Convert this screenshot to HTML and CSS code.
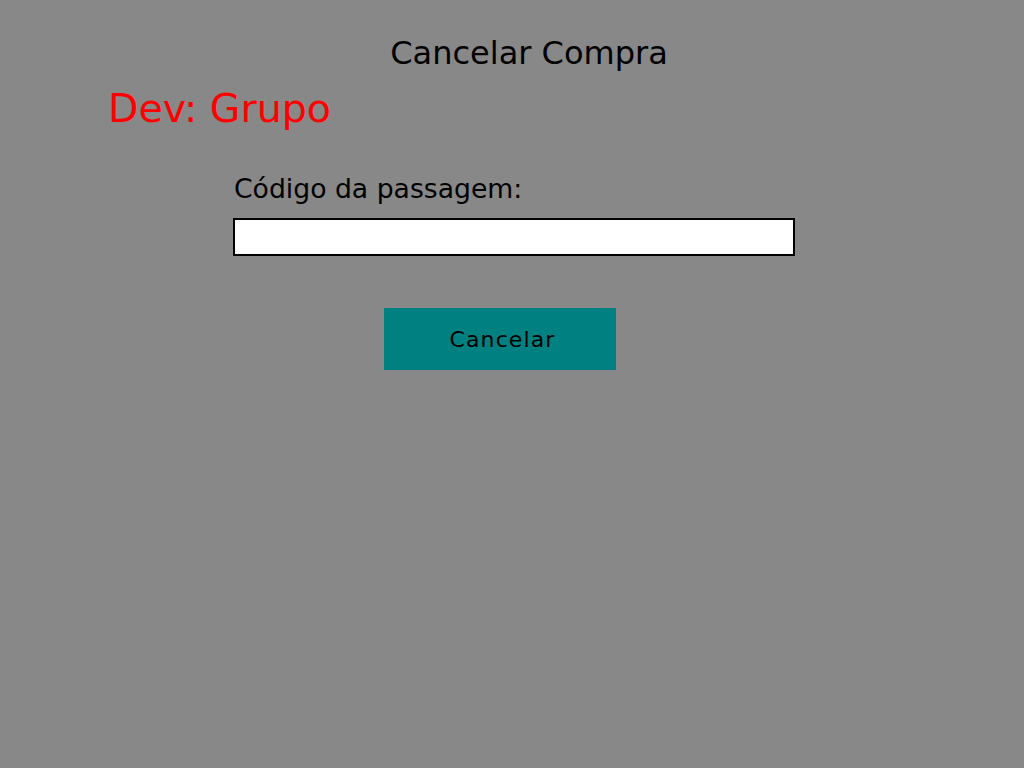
FILE: index.html
```html
<!DOCTYPE html>
<html lang="pt">
<head>
<meta charset="utf-8">
<title>Cancelar Compra</title>
<link rel="stylesheet" href="styles.css">
</head>
<body>
<main class="page">
  <h1 class="title">Cancelar Compra</h1>
  <p class="dev">Dev: Grupo</p>
  <form class="form">
    <label class="label" for="codigo">Código da passagem:</label>
    <input class="input" id="codigo" type="text">
    <button class="btn" type="button">Cancelar</button>
  </form>
</main>
</body>
</html>
```

FILE: styles.css
```css
html, body {
  margin: 0;
  padding: 0;
  background: #888888;
  height: 100%;
}
body {
  font-family: "DejaVu Sans", sans-serif;
  color: #000;
}
.page {
  display: flex;
  flex-direction: column;
  padding-top: 35px;
}
.title {
  margin: 0;
  font-size: 32px;
  font-weight: normal;
  line-height: 37px;
  text-align: center;
  padding-left: 34px;
}
.dev {
  margin: 13px 0 0 108px;
  font-size: 39.5px;
  line-height: 46px;
  color: #ff0000;
}
.form {
  display: flex;
  flex-direction: column;
  align-items: flex-start;
  margin: 42px 0 0 233px;
  width: 562px;
}
.label {
  font-size: 26.67px;
  line-height: 31px;
  padding-left: 1px;
}
.input {
  box-sizing: border-box;
  margin-top: 14px;
  width: 562px;
  height: 38px;
  border: 2px solid #000;
  background: #fff;
  padding: 0 6px;
  font-family: "DejaVu Sans", sans-serif;
  font-size: 20px;
  outline: none;
}
.btn {
  margin: 52px 0 0 151px;
  width: 232px;
  height: 62px;
  border: none;
  background: #008080;
  color: #000;
  font-family: "DejaVu Sans", sans-serif;
  font-size: 22px;
  letter-spacing: 1.1px;
  padding: 0 0 0 5px;
  cursor: pointer;
}
```
